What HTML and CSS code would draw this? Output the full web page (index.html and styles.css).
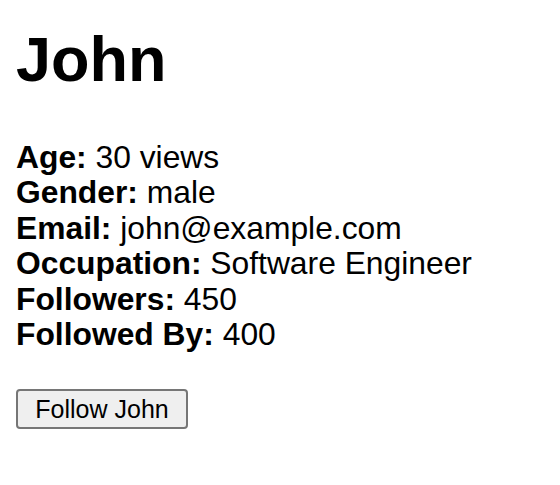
FILE: index.html
```html
<!DOCTYPE html>
<html>
<head>
<meta charset="utf-8">
<link rel="stylesheet" href="styles.css">
</head>
<body>
<div class="page">
  <h1 class="name">John</h1>
  <div class="info">
    <div><b>Age:</b> 30 views</div>
    <div><b>Gender:</b> male</div>
    <div><b>Email:</b> john@example.com</div>
    <div><b>Occupation:</b> Software Engineer</div>
    <div><b>Followers:</b> 450</div>
    <div><b>Followed By:</b> 400</div>
  </div>
  <button class="follow">Follow John</button>
</div>
</body>
</html>
```
FILE: styles.css
```css
html, body {
  margin: 0;
  background: #fff;
}
.page {
  padding: 23px 16px 0 16px;
  font-family: "Liberation Sans", Arial, sans-serif;
  color: #000;
}
.name {
  margin: 0;
  font-size: 63px;
  line-height: 72px;
  font-weight: bold;
}
.info {
  margin-top: 45px;
  font-size: 31.8px;
  line-height: 35.4px;
}
.info b {
  font-weight: bold;
}
.follow {
  display: block;
  margin-top: 37px;
  width: 172px;
  height: 40px;
  padding: 0;
  font-family: "Liberation Sans", Arial, sans-serif;
  font-size: 25px;
  color: #000;
  background: #efefef;
  border: 2px solid #767676;
  border-radius: 4px;
}
```
